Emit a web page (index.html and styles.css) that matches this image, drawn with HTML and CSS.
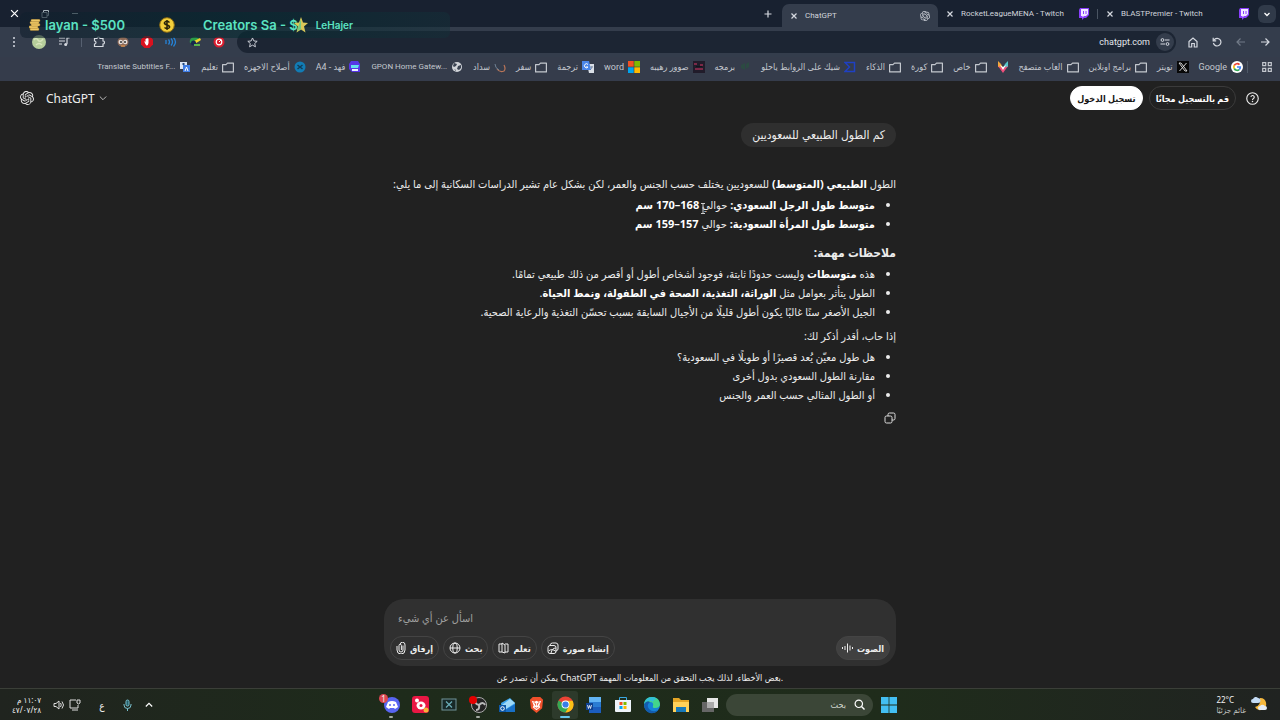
FILE: index.html
```html
<!DOCTYPE html>
<html lang="ar" dir="rtl">
<head>
    <meta charset="UTF-8">
    <meta name="viewport" content="width=device-width, initial-scale=1.0">
    <title>ChatGPT</title>
    <link rel="stylesheet" href="styles.css">
</head>
<body>
    <!-- shared icons -->
    <svg class="sprite" aria-hidden="true">
        <symbol id="folder" viewBox="0 0 12 11"><path d="M.6 2.600h3.400l1.500-1.500h5.900v8.800H.6z" fill="none" stroke="#c3c7ce" stroke-width="1.200" stroke-linejoin="round"/></symbol>
        <symbol id="close" viewBox="0 0 8 8"><path d="M1.500 1.500l5 5m0-5l-5 5" stroke="#d5d9e0" stroke-width="1.200"/></symbol>
        <symbol id="twitch" viewBox="0 0 12 12"><path d="M2 0h9v7l-3 3H6l-2 2v-2H1V2z" fill="#8a3ffc"/><path d="M3 1h7v5L8 8H6L4.500 9.500V8H3z" fill="#f1e8ff"/><path d="M5.500 3v3M8 3v3" stroke="#8a3ffc"/></symbol>
        <symbol id="openai" viewBox="0 0 24 24"><path fill="currentColor" d="M22.282 9.821a5.985 5.985 0 0 0-.516-4.911 6.046 6.046 0 0 0-6.510-2.900A6.065 6.065 0 0 0 4.981 4.182a5.985 5.985 0 0 0-3.998 2.900 6.046 6.046 0 0 0 .743 7.097 5.980 5.980 0 0 0 .511 4.911 6.051 6.051 0 0 0 6.515 2.900A5.985 5.985 0 0 0 13.260 24a6.056 6.056 0 0 0 5.772-4.206 5.989 5.989 0 0 0 3.998-2.900 6.056 6.056 0 0 0-.748-7.073zm-9.022 12.608a4.476 4.476 0 0 1-2.876-1.041l.142-.080 4.778-2.758a.795.795 0 0 0 .393-.681v-6.737l2.020 1.169a.071.071 0 0 1 .038.052v5.583a4.504 4.504 0 0 1-4.495 4.494zm-9.661-4.125a4.471 4.471 0 0 1-.535-3.014l.142.085 4.783 2.758a.771.771 0 0 0 .781 0l5.843-3.369v2.332a.080.080 0 0 1-.033.062L9.740 19.950a4.499 4.499 0 0 1-6.141-1.646zM2.341 7.896a4.485 4.485 0 0 1 2.366-1.973V11.600a.766.766 0 0 0 .388.677l5.814 3.354-2.020 1.169a.076.076 0 0 1-.071 0l-4.830-2.787A4.504 4.504 0 0 1 2.341 7.872zm16.596 3.856L13.104 8.364 15.119 7.200a.076.076 0 0 1 .071 0l4.830 2.791a4.494 4.494 0 0 1-.677 8.104v-5.677a.790.790 0 0 0-.407-.667zm2.011-3.023l-.142-.085-4.774-2.782a.776.776 0 0 0-.785 0L9.409 9.230V6.897a.066.066 0 0 1 .028-.062l4.830-2.787a4.499 4.499 0 0 1 6.680 4.660zM8.307 12.863l-2.020-1.164a.080.080 0 0 1-.038-.057V6.074a4.499 4.499 0 0 1 7.376-3.454l-.142.081L8.704 5.459a.795.795 0 0 0-.393.681zm1.098-2.365l2.602-1.500 2.607 1.500v2.999l-2.597 1.500-2.607-1.500z"/></symbol>
    </svg>

    <!-- browser window -->
    <header class="browser">
        <div class="tab-strip">
            <button class="tab-search" aria-label="Search tabs"><svg width="8" height="8" viewBox="0 0 8 8"><path d="M1.500 3L4 5.500 6.500 3" fill="none" stroke="#fff" stroke-width="1.300"/></svg></button>
            <div class="tab">
                <svg width="12" height="12"><use href="#twitch"/></svg>
                <span class="tab-title">BLASTPremier - Twitch</span>
                <button aria-label="Close tab"><svg width="8" height="8"><use href="#close"/></svg></button>
            </div>
            <div class="tab divided">
                <svg width="12" height="12"><use href="#twitch"/></svg>
                <span class="tab-title">RocketLeagueMENA - Twitch</span>
                <button aria-label="Close tab"><svg width="8" height="8"><use href="#close"/></svg></button>
            </div>
            <div class="tab active">
                <svg width="10" height="10"><use href="#openai"/></svg>
                <span class="tab-title">ChatGPT</span>
                <button aria-label="Close tab"><svg width="8" height="8"><use href="#close"/></svg></button>
            </div>
            <button class="new-tab" aria-label="New tab"><svg width="8" height="8" viewBox="0 0 8 8"><path d="M4 .5v7M.5 4h7" stroke="#d5d9e0" stroke-width="1.200"/></svg></button>
            <div class="window-buttons">
                <button aria-label="Minimize"><svg width="8" height="8" viewBox="0 0 8 8"><path d="M1 3.500h6" stroke="#a8b4bb"/></svg></button>
                <button aria-label="Restore"><svg width="8" height="8" viewBox="0 0 8 8"><path d="M1 2.500h5v5H1zM2.500 2.500v-2h5v5H6" fill="none" stroke="#a8b4bb"/></svg></button>
                <button aria-label="Close"><svg width="9" height="9" viewBox="0 0 8 8"><path d="M1 1l6 6m0-6L1 7" stroke="#fff" stroke-width="1.100"/></svg></button>
            </div>
        </div>

        <div class="toolbar">
            <div class="nav-buttons">
                <button aria-label="Back"><svg width="10" height="10" viewBox="0 0 10 10"><path d="M1 5h8M5.500 1.500L9 5 5.500 8.500" fill="none" stroke="#d5d9e0" stroke-width="1.200"/></svg></button>
                <button aria-label="Forward"><svg width="10" height="10" viewBox="0 0 10 10"><path d="M9 5H1M4.500 1.500L1 5l3.500 3.500" fill="none" stroke="#717a87" stroke-width="1.200"/></svg></button>
                <button aria-label="Reload"><svg width="10" height="10" viewBox="0 0 10 10"><path d="M2 3a3.800 3.800 0 1 1-.6 3M1.200.8v3h3" fill="none" stroke="#d5d9e0" stroke-width="1.200"/></svg></button>
                <button aria-label="Home"><svg width="10" height="11" viewBox="0 0 10 11"><path d="M1 4.500L5 1l4 3.500V10H6.300V6.500H3.700V10H1z" fill="none" stroke="#d5d9e0" stroke-width="1.200"/></svg></button>
            </div>
            <div class="address-bar">
                <button class="site-info" aria-label="Site information"><svg width="10" height="8" viewBox="0 0 10 8"><path d="M5 2h4.500M.5 6H5" stroke="#d5d9e0"/><circle cx="2.500" cy="2" r="1.400" fill="none" stroke="#d5d9e0"/><circle cx="7.500" cy="6" r="1.400" fill="none" stroke="#d5d9e0"/></svg></button>
                <input type="text" value="chatgpt.com" aria-label="Address" dir="rtl">
                <button aria-label="Bookmark"><svg width="11" height="11" viewBox="0 0 12 12"><path d="M6 1l1.500 3.300 3.600.4-2.700 2.400.8 3.600L6 8.900l-3.200 1.800.8-3.600L.9 4.700l3.600-.4z" fill="none" stroke="#d5d9e0"/></svg></button>
            </div>
            <div class="extensions">
                <svg width="12" height="12" viewBox="0 0 12 12"><circle cx="6" cy="6" r="5.500" fill="#d91c2e"/><circle cx="6" cy="6" r="2.800" fill="none" stroke="#fff" stroke-width="1.200"/><path d="M6 6l2-2" stroke="#fff"/></svg>
                <svg width="12" height="12" viewBox="0 0 12 12"><path d="M1 7a5 5 0 0 1 9-4l1 2z" fill="#2b9c48"/><path d="M11 2L3 6l1 3 8-5z" fill="#f3d52b"/><circle cx="4.500" cy="7" r="2.500" fill="#16294d"/><path d="M5 8h6v2H5z" fill="#58b64c"/></svg>
                <svg width="12" height="12" viewBox="0 0 12 12"><path d="M1 4v4M3.500 3.500q2 2.500 0 5M6 2.500q3 3.500 0 7M8.500 1.500q4 4.500 0 9" fill="none" stroke="#2583d8" stroke-width="1.300"/></svg>
                <svg width="12" height="12" viewBox="0 0 12 12"><path d="M3.500 0h5L12 3.500v5L8.500 12h-5L0 8.500v-5z" fill="#d9121f"/><path d="M3.500 5l1 1V3h1v2-3h1v3-2.500h1V7Q7 10 5.500 9.500 4.500 9 3.500 6z" fill="#fff"/></svg>
                <svg width="12" height="12" viewBox="0 0 12 12"><ellipse cx="6" cy="6" rx="5.500" ry="5" fill="#8d6a58"/><circle cx="3.700" cy="6" r="2.200" fill="#e5dfdc"/><circle cx="8.300" cy="6" r="2.200" fill="#e5dfdc"/><circle cx="4" cy="6" r="1" fill="#333"/><circle cx="8" cy="6" r="1" fill="#333"/><path d="M4 10h4" stroke="#ef9d4a"/></svg>
                <svg width="12" height="12" viewBox="0 0 12 12"><path d="M1.500 2.500H4a1.500 1.500 0 0 1 3 0h3V5a1.500 1.500 0 0 1 0 3v2.500H1.500V8a1.500 1.500 0 0 0 0-3z" fill="none" stroke="#d5d9e0" stroke-width="1.200"/></svg>
                <span class="divider"></span>
                <svg width="12" height="12" viewBox="0 0 12 12"><path d="M1 2h6M1 5h6M1 8h3M9 8V2h2.500" fill="none" stroke="#d5d9e0" stroke-width="1.200"/><circle cx="7.700" cy="8.500" r="1.500" fill="#d5d9e0"/></svg>
                <svg width="14" height="14" viewBox="0 0 14 14"><circle cx="7" cy="7" r="7" fill="#b6ce9b"/><path d="M2 5q2-3 4 0t5-1M4 10q3-3 6 0" fill="none" stroke="#d8e5bc" stroke-width="1.500"/></svg>
                <svg width="12" height="12" viewBox="0 0 12 12"><g fill="#d5d9e0"><circle cx="6" cy="2" r="1"/><circle cx="6" cy="6" r="1"/><circle cx="6" cy="10" r="1"/></g></svg>
            </div>
        </div>

        <nav class="bookmarks">
            <button class="apps" aria-label="Apps"><svg width="10" height="10" viewBox="0 0 10 10"><path d="M.7.7h3v3h-3zM6.300.7h3v3h-3zM.7 6.300h3v3h-3zM6.300 6.300h3v3h-3z" fill="none" stroke="#c3c7ce" stroke-width="1.200"/></svg></button>
            <ul>
                <li><a href="#"><svg width="12" height="12" viewBox="0 0 12 12"><circle cx="6" cy="6" r="6" fill="#fff"/><g fill="none" stroke-width="1.700"><path d="M8.500 3.700A3.300 3.300 0 0 0 3.200 4.500" stroke="#ea4335"/><path d="M3.200 4.500a3.300 3.300 0 0 0 0 3" stroke="#fbbc05"/><path d="M3.200 7.500a3.300 3.300 0 0 0 5 1.100" stroke="#34a853"/><path d="M8.200 8.600A3.300 3.300 0 0 0 9.300 6H6" stroke="#4285f4"/></g></svg>Google</a></li>
                <li><a href="#"><svg width="12" height="12" viewBox="0 0 12 12"><path d="M0 0h12v12H0z" fill="#080808"/><path d="M2 2h2l6 8H8zM9.500 2L2.500 10" fill="none" stroke="#e5e5e5" stroke-width=".9"/></svg>تويتر</a></li>
                <li><a href="#"><svg width="12" height="11"><use href="#folder"/></svg>برامج اونلاين</a></li>
                <li><a href="#"><svg width="12" height="11"><use href="#folder"/></svg>العاب متصفح</a></li>
                <li><a href="#" aria-label="Fox"><svg width="12" height="12" viewBox="0 0 12 12"><path d="M1 0l3 3 2 4-5-1z" fill="#f3a73c"/><path d="M11 0L8 3 6 7l5-1z" fill="#55c7c9"/><path d="M1 5l5 7 5-7-5 2z" fill="#ef4f7b"/><path d="M3 4l3 5 3-5-3 2z" fill="#fff"/></svg></a></li>
                <li><a href="#"><svg width="12" height="11"><use href="#folder"/></svg>خاص</a></li>
                <li><a href="#"><svg width="12" height="11"><use href="#folder"/></svg>كورة</a></li>
                <li><a href="#"><svg width="12" height="11"><use href="#folder"/></svg>الذكاء</a></li>
                <li><a href="#"><svg width="12" height="12" viewBox="0 0 12 12"><path d="M1 1.500h9.500v9H1L5.500 6z" fill="none" stroke="#1f40c4" stroke-width="1.500"/></svg>شيك على الروابط ياحلو</a></li>
                <li><a href="#"><svg width="12" height="12" viewBox="0 0 12 12"><path d="M2 4l4-2v7l-4-2zM7 3l3-2v5L7 8z" fill="#2c4a42"/></svg>برمجه</a></li>
                <li><a href="#"><svg width="12" height="12" viewBox="0 0 12 12"><path d="M0 0h12v12H0z" fill="#211c2a"/><path d="M1 3h3M7 4h3M2 8h8" stroke="#7c2947" stroke-width="2"/><path d="M3 5.500h6" stroke="#11151b"/></svg>صوور رهيبه</a></li>
                <li><a href="#"><svg width="12" height="12" viewBox="0 0 12 12"><path d="M0 0h5.700v5.700H0z" fill="#f25022"/><path d="M6.300 0H12v5.700H6.300z" fill="#7fba00"/><path d="M0 6.300h5.700V12H0z" fill="#00a4ef"/><path d="M6.300 6.300H12V12H6.300z" fill="#ffb900"/></svg>word</a></li>
                <li><a href="#"><svg width="12" height="12" viewBox="0 0 12 12"><path d="M5 3h7v9H7z" fill="#dadfe7"/><path d="M0 0h7l2 9H0z" fill="#4a86e8"/><path d="M6 3.500A2 2 0 1 0 6 6H4" fill="none" stroke="#fff"/><path d="M8 6h3M10 5q0 3-2 4" fill="none" stroke="#647794" stroke-width=".7"/></svg>ترجمة</a></li>
                <li><a href="#"><svg width="12" height="11"><use href="#folder"/></svg>سفر</a></li>
                <li><a href="#"><svg width="12" height="12" viewBox="0 0 12 12"><path d="M3 8q3 4 7 2 2-2 0-6" fill="none" stroke="#b97558" stroke-width="1.200"/><path d="M1 3q0 4 4 6" fill="none" stroke="#708295"/></svg>سداد</a></li>
                <li><a href="#"><svg width="12" height="12" viewBox="0 0 12 12"><circle cx="6" cy="6" r="5" fill="#d0d3d8"/><path d="M3 2l3 1-1 2-2 1-1-1zM7 5l3-1v3L8 9 6 8zM3 8l2 1v1z" fill="#3a4251"/></svg><bdi>GPON Home Gatew...</bdi></a></li>
                <li><a href="#"><svg width="12" height="12" viewBox="0 0 12 12"><path d="M2 0h7l2 3v8H3L0 8V3z" fill="#5735e5"/><path d="M2 4h8l-1 3H2z" fill="#65e0ef"/><path d="M3 8h6v2H3z" fill="#eaf2ff"/></svg>فهد - A4</a></li>
                <li><a href="#"><svg width="12" height="12" viewBox="0 0 12 12"><circle cx="6" cy="6" r="5.500" fill="#127cb5"/><path d="M3.500 4l5 4m0-4l-5 4" stroke="#103c59" stroke-width="1.500"/></svg>أصلاح الاجهزه</a></li>
                <li><a href="#"><svg width="12" height="11"><use href="#folder"/></svg>تعليم</a></li>
                <li><a href="#"><svg width="12" height="12" viewBox="0 0 12 12"><path d="M1 1h7v7H1z" fill="#dbe5f5"/><path d="M4 4h7v7H4z" fill="#3f7de5"/><path d="M3 3h3M4.500 2v2" fill="none" stroke="#21477e"/><path d="M6 10l1.500-4L9 10" fill="none" stroke="#fff"/></svg><bdi>Translate Subtitles F...</bdi></a></li>
            </ul>
        </nav>

        <!-- stream alert band -->
        <div class="alert-band" dir="ltr">
            <span class="donor"><svg width="12" height="12" viewBox="0 0 12 12"><g fill="#eec968" stroke="#a37829" stroke-width=".4"><rect x="1" y="9" width="9" height="2.500" rx="1"/><rect x="0" y="6.800" width="9" height="2.500" rx="1"/><rect x="2" y="4.600" width="9" height="2.500" rx="1"/><rect x="1" y="2.400" width="9" height="2.500" rx="1"/><rect x="2" y=".3" width="9" height="2.500" rx="1"/></g></svg>layan - $500</span>
            <svg class="coin" width="16" height="16" viewBox="0 0 16 16"><circle cx="8" cy="8" r="7.300" fill="#f2cf3b" stroke="#8d6c13"/><path d="M10.500 5.500Q8 3.500 6 5t2 3 2 3-4.500-.5M8 3v10" fill="none" stroke="#272309" stroke-width="1.500"/></svg>
            <span class="goal">Creators Sa - $<svg width="14" height="16" viewBox="0 0 14 16"><path d="M7 0l2 5.500 5 .5-4 3.500 1.500 6L7 12.500 2.500 15.500 4 9.500 0 6l5-.5z" fill="#d9c858"/><path d="M7 2v10l-4 2 1.500-5z" fill="#75c982"/></svg></span>
            <span class="follower">LeHajer</span>
        </div>
    </header>

    <!-- chat page -->
    <main class="chat">
        <div class="chat-header">
            <button class="help" aria-label="مساعدة"><svg width="13" height="13" viewBox="0 0 14 14"><circle cx="7" cy="7" r="6.200" fill="none" stroke="#eee" stroke-width="1.200"/><path d="M5.300 5.500a1.800 1.800 0 1 1 2.500 1.700q-.8.4-.8 1.300" fill="none" stroke="#eee" stroke-width="1.200"/><circle cx="7" cy="10.300" r=".8" fill="#eee"/></svg></button>
            <button class="sign-up">قم بالتسجيل مجانًا</button>
            <button class="log-in">تسجيل الدخول</button>
            <button class="model" dir="ltr">
                <svg width="14" height="14"><use href="#openai"/></svg>
                <span>ChatGPT</span>
                <svg width="8" height="8" viewBox="0 0 8 8"><path d="M.8 2.500L4 5.700l3.200-3.200" fill="none" stroke="#bbb"/></svg>
            </button>
        </div>

        <div class="thread">
            <p class="question">كم الطول الطبيعي للسعوديين</p>
            <article class="answer">
                <p>الطول <strong>الطبيعي (المتوسط)</strong> للسعوديين يختلف حسب الجنس والعمر، لكن بشكل عام تشير الدراسات السكانية إلى ما يلي:</p>
                <ul>
                    <li><strong>متوسط طول الرجل السعودي:</strong> حوالي <strong>168–170 سم</strong></li>
                    <li><strong>متوسط طول المرأة السعودية:</strong> حوالي <strong>157–159 سم</strong></li>
                </ul>
                <h3>ملاحظات مهمة:</h3>
                <ul>
                    <li>هذه <strong>متوسطات</strong> وليست حدودًا ثابتة، فوجود أشخاص أطول أو أقصر من ذلك طبيعي تمامًا.</li>
                    <li>الطول يتأثر بعوامل مثل <strong>الوراثة، التغذية، الصحة في الطفولة، ونمط الحياة</strong>.</li>
                    <li>الجيل الأصغر سنًا غالبًا يكون أطول قليلًا من الأجيال السابقة بسبب تحسّن التغذية والرعاية الصحية.</li>
                </ul>
                <p>إذا حاب، أقدر أذكر لك:</p>
                <ul>
                    <li>هل طول معيّن يُعد قصيرًا أو طويلًا في السعودية؟</li>
                    <li>مقارنة الطول السعودي بدول أخرى</li>
                    <li>أو الطول المثالي حسب العمر والجنس</li>
                </ul>
                <button class="copy" aria-label="نسخ"><svg width="12" height="12" viewBox="0 0 12 12"><rect x="1" y="4" width="7" height="7" rx="1.500" fill="none" stroke="#ddd"/><path d="M4 4V2.500A1.500 1.500 0 0 1 5.500 1h4A1.500 1.500 0 0 1 11 2.500v4A1.500 1.500 0 0 1 9.500 8H8" fill="none" stroke="#ddd"/></svg></button>
                <svg class="cursor" width="6" height="11" viewBox="0 0 6 11"><path d="M1 .5h4M3 .5v10M1 10.500h4" stroke="#ccc"/></svg>
            </article>
        </div>

        <div class="composer-area">
            <form class="composer">
                <input type="text" placeholder="اسأل عن أي شيء" aria-label="اسأل عن أي شيء">
                <div class="composer-tools" dir="ltr">
                    <button type="button"><svg width="10" height="12" viewBox="0 0 10 12"><path d="M7 3.500v4.500a2 2 0 0 1-4 0V3.500a1.200 1.200 0 0 1 2.400 0V8M1 4v4a4 4 0 0 0 8 0V3a2.500 2.500 0 0 0-5-.5" fill="none" stroke="#eee"/></svg><span>إرفاق</span></button>
                    <button type="button"><svg width="12" height="12" viewBox="0 0 12 12"><g fill="none" stroke="#eee"><circle cx="6" cy="6" r="5"/><ellipse cx="6" cy="6" rx="2.200" ry="5"/><path d="M1 6h10"/></g></svg><span>بحث</span></button>
                    <button type="button"><svg width="11" height="12" viewBox="0 0 11 12"><path d="M4 2H1v8h3M4 1l3 2v8L4 10zM7 2h3v8H7" fill="none" stroke="#eee"/></svg><span>تعلم</span></button>
                    <button type="button"><svg width="12" height="12" viewBox="0 0 12 12"><rect x="1" y="3.500" width="8" height="8" rx="2" fill="none" stroke="#eee"/><path d="M3 3q.5-2 2.500-2H9q2 .3 2 2v4q0 1.500-2 2M1.500 9Q5 6 9 9.500M4 11Q5 6 9 6" fill="none" stroke="#eee"/></svg><span>إنشاء صورة</span></button>
                    <button type="button" class="voice"><svg width="11" height="12" viewBox="0 0 11 12"><path d="M.5 5v2M3 4v4M5.500 1.500v9M8 3.500v5M10.500 5v2" stroke="#eee"/></svg><span>الصوت</span></button>
                </div>
            </form>
            <p class="disclaimer" dir="ltr">يمكن أن تصدر عن ChatGPT بعض الأخطاء. لذلك يجب التحقق من المعلومات المهمة.</p>
        </div>
    </main>

    <!-- windows taskbar -->
    <footer class="taskbar">
        <div class="weather">
            <svg width="17" height="17" viewBox="0 0 17 17"><path d="M9 2a6 6 0 1 1-5 9Q10 10 9 2z" fill="#f5b83d"/><path d="M2 7a2 2 0 0 1 0-4 3 3 0 0 1 5-1 2.500 2.500 0 0 1 0 5z" fill="#c4dcf5"/><path d="M9 14a2 2 0 0 1 0-4 3 3 0 0 1 5 0 2 2 0 0 1 0 4z" fill="#e5edf7"/></svg>
            <div><span dir="ltr">22°C</span><span class="sky">غائم جزئيًا</span></div>
        </div>
        <div class="apps-row">
            <button aria-label="Start"><svg width="16" height="16" viewBox="0 0 16 16"><path d="M0 0h7.600v7.600H0zM8.400 0H16v7.600H8.400zM0 8.400h7.600V16H0zM8.400 8.400H16V16H8.400z" fill="#43bff2"/></svg></button>
            <label class="search"><svg width="11" height="11" viewBox="0 0 11 11"><circle cx="4.800" cy="4.800" r="3.700" fill="none" stroke="#fff" stroke-width="1.200"/><path d="M7.500 7.500l3 3" stroke="#fff" stroke-width="1.400"/></svg><input type="text" placeholder="بحث" aria-label="بحث"></label>
            <button aria-label="Task view"><svg width="18" height="16" viewBox="0 0 18 16"><path d="M1 5h12v10H1z" fill="#666"/><path d="M6 1h11v10H6z" fill="#e7e7e7"/><path d="M6 5h7v6H6z" fill="#aaa"/></svg></button>
            <button aria-label="File Explorer"><svg width="18" height="16" viewBox="0 0 18 16"><path d="M1 1h6l2 2h8v12H1z" fill="#e4a526"/><path d="M1 5h16v10H1z" fill="#ffd15a"/><path d="M4 10h10v5H4z" fill="#1779ba"/></svg></button>
            <button aria-label="Edge"><svg width="18" height="18" viewBox="0 0 18 18"><circle cx="9" cy="9" r="8" fill="#1683d8"/><path d="M1 8Q2 1 9 1t8 7q0 4-5 4-3 0-2-2 1-4-3-4-4 0-6 4z" fill="#43d58b"/><path d="M1 8Q3 1 9 1q3 0 5 2-4 0-4 4-1-3-4-2-3 0-5 3z" fill="#32bfd8"/><path d="M1 8q3-4 6-2-4 3-1 7 4 4 9 1-3 4-8 3Q1 15 1 8z" fill="#135cae"/></svg></button>
            <button aria-label="Store"><svg width="18" height="17" viewBox="0 0 18 17"><path d="M5.500 5V1.500h7V5" fill="none" stroke="#3ba8e2"/><path d="M1 4h16v11q0 1-1 1H2q-1 0-1-1z" fill="#eef4fa"/><path d="M5.500 6h3v3h-3z" fill="#f25022"/><path d="M9.500 6h3v3h-3z" fill="#7fba00"/><path d="M5.500 10h3v3h-3z" fill="#00a4ef"/><path d="M9.500 10h3v3h-3z" fill="#ffb900"/></svg></button>
            <button aria-label="Word"><svg width="16" height="16" viewBox="0 0 16 16"><path d="M3 0h12v5H3z" fill="#62b4f4"/><path d="M3 5h12v5H3z" fill="#2b7cd3"/><path d="M3 10h12v6H3z" fill="#1b5dbe"/><path d="M0 6h7v7H0z" fill="#104291"/><path d="M1.500 8l1 3.500 1-3 1 3 1-3.500" fill="none" stroke="#fff" stroke-width=".8"/></svg></button>
            <button class="open" aria-label="Chrome"><svg width="17" height="17" viewBox="0 0 18 18"><circle cx="9" cy="9" r="8.500" fill="#e94335"/><path d="M9 9L1.600 4.800A8.500 8.500 0 0 0 9 17.500l4-6.200z" fill="#35a853"/><path d="M9 5h7.500A8.500 8.500 0 0 1 9 17.500L12.600 11z" fill="#fbc116"/><circle cx="9" cy="9" r="4.200" fill="#fff"/><circle cx="9" cy="9" r="3.300" fill="#397ee8"/></svg></button>
            <button aria-label="Brave"><svg width="15" height="17" viewBox="0 0 16 18"><path d="M4 1h8l3 3-1 9-6 5-6-5L1 4z" fill="#f0502b"/><path d="M3 5l3 1 2-1 2 1 3-1-2 5 1 2-4 3-4-3 1-2z" fill="#fff"/><path d="M5 7l2 1v2M11 7L9 8v2M6 12l2 1 2-1" fill="none" stroke="#f0502b"/></svg></button>
            <button aria-label="Outlook"><svg width="17" height="16" viewBox="0 0 17 16"><path d="M2 6l9-5 5 5v9H3z" fill="#3ba5ee"/><path d="M3 8l8-6 5 4-9 6z" fill="#9edaf8"/><path d="M3 15l13-8v8z" fill="#1870c7"/><path d="M0 8h7v7H0z" fill="#0e59a8"/><circle cx="3.500" cy="11.500" r="1.800" fill="none" stroke="#fff"/></svg></button>
            <button class="running" aria-label="OBS"><svg width="18" height="18" viewBox="0 0 18 18"><circle cx="10" cy="9" r="7.500" fill="#242424" stroke="#aaa"/><path d="M10 9Q5 8 7 4M10 9q1 5-3 5M10 9q4-4 6 0" fill="none" stroke="#bbb" stroke-width="2"/><circle cx="4" cy="4" r="4" fill="#e50000"/></svg></button>
            <button aria-label="XSplit"><svg width="16" height="13" viewBox="0 0 16 13"><rect x="1" y="1" width="14" height="11" fill="#172928" stroke="#71939a"/><path d="M5 3.500l6 6m0-6l-6 6" stroke="#6badb8" stroke-width="1.200"/></svg></button>
            <button aria-label="Recorder"><svg width="17" height="17" viewBox="0 0 17 17"><rect x="0" y="0" width="17" height="17" rx="3" fill="#e91744"/><ellipse cx="9" cy="9.500" rx="4.500" ry="4" fill="#fff"/><circle cx="5" cy="4.500" r="2" fill="#fff"/><circle cx="9" cy="9.500" r="1.500" fill="#e91744"/><circle cx="14" cy="14" r="2.500" fill="#f5b438"/></svg></button>
            <button class="running" aria-label="Discord"><svg width="17" height="17" viewBox="0 0 17 17"><circle cx="9" cy="9" r="8" fill="#5865f2"/><path d="M5 6q4-2 8 0l2 5-3 2-1-1H7l-1 1-3-2z" fill="#fff"/><circle cx="7" cy="9" r="1" fill="#5865f2"/><circle cx="11" cy="9" r="1" fill="#5865f2"/></svg><span class="badge">1</span></button>
        </div>
        <div class="tray">
            <svg width="8" height="8" viewBox="0 0 8 8"><path d="M.8 5.500L4 2.300l3.200 3.200" fill="none" stroke="#fff" stroke-width="1.200"/></svg>
            <svg width="9" height="12" viewBox="0 0 9 12"><rect x="3" y="1" width="3" height="6" rx="1.500" fill="#245d68" stroke="#7ac1ce"/><path d="M1 5v1a3.500 3.500 0 0 0 7 0V5M4.500 9.500V12" fill="none" stroke="#7ac1ce"/></svg>
            <span class="language">ع</span>
            <div class="network">
                <svg width="12" height="12" viewBox="0 0 12 12"><path d="M7 1H1v8h8V6M3 11h6M8 1h3v3L9.500 5 8 4z" fill="none" stroke="#ddd"/></svg>
                <svg width="12" height="12" viewBox="0 0 12 12"><path d="M1 4.500h2L6 2v8L3 7.500H1zM7.500 4q1.500 2 0 4M9 2.500q3 3.500 0 7" fill="none" stroke="#ddd"/></svg>
            </div>
            <div class="clock"><span>١١:٠٧ م</span><span>٤٧/٠٧/٢٨</span></div>
        </div>
    </footer>
</body>
</html>
```
FILE: styles.css
```css
* {
    box-sizing: border-box;
}
body {
    margin: 0;
    min-height: 100vh;
    display: flex;
    flex-direction: column;
    background: #212121;
    color: #ececec;
    font-family: "Noto Sans", "DejaVu Sans Condensed", "DejaVu Sans", sans-serif;
    font-size: 11px;
}
button, input {
    font: inherit;
    color: inherit;
    background: none;
    border: 0;
    padding: 0;
}
button {
    display: flex;
    align-items: center;
    justify-content: center;
}
svg {
    display: block;
    flex: none;
}
ul, p, h3 {
    margin: 0;
    padding: 0;
}
.sprite {
    position: absolute;
    width: 0;
    height: 0;
}

/* browser */
.browser {
    position: relative;
    background: #343d4c;
    font-family: Roboto, "DejaVu Sans Condensed", "DejaVu Sans", sans-serif;
    font-size: 9px;
    color: #d0d4db;
}
.tab-strip {
    display: flex;
    align-items: center;
    height: 27px;
    padding: 0 4px 0 10px;
    background: #182130;
}
.tab-search {
    width: 18px;
    height: 18px;
    border-radius: 6px;
    background: #303a49;
}
.tab {
    display: flex;
    align-items: center;
    gap: 7px;
    width: 160px;
    height: 23px;
    padding: 0 8px;
}
.tab-title {
    flex: 1;
    text-align: left;
    white-space: nowrap;
    font-size: 8px;
}
.tab.divided {
    background: linear-gradient(#4a5462, #4a5462) right center / 1px 10px no-repeat;
}
.tab.active {
    width: 156px;
    align-self: flex-end;
    background: #343d4c;
    border-radius: 7px 7px 0 0;
}
.new-tab {
    margin-right: 10px;
}
.window-buttons {
    display: flex;
    gap: 22px;
    margin-right: auto;
}
.toolbar {
    display: flex;
    align-items: center;
    height: 30px;
    padding: 0 10px 0 8px;
}
.nav-buttons {
    display: flex;
    align-items: center;
    gap: 14px;
    margin-left: 12px;
}
.address-bar {
    flex: 1;
    display: flex;
    align-items: center;
    gap: 6px;
    height: 22px;
    padding: 0 2px 0 10px;
    border-radius: 11px;
    background: #1c2533;
}
.address-bar input {
    flex: 1;
    color: #e4e7ec;
}
.site-info {
    width: 18px;
    height: 18px;
    border-radius: 9px;
    background: #343d4c;
}
.extensions {
    display: flex;
    align-items: center;
    gap: 12px;
    margin-right: 12px;
}
.divider {
    width: 1px;
    height: 9px;
    margin: 0 -1px;
    background: #566070;
}
.bookmarks {
    display: flex;
    align-items: center;
    height: 24px;
    padding: 0 8px 4px 97px;
    background: #353c4b;
}
.apps {
    padding-left: 14px;
}
.bookmarks ul {
    flex: 1;
    display: flex;
    justify-content: space-between;
    list-style: none;
    padding-right: 4px;
    border-right: 1px solid #4f5967;
}
.bookmarks a {
    display: flex;
    align-items: center;
    gap: 4px;
    color: #c3c7ce;
    text-decoration: none;
    white-space: nowrap;
    line-height: 12px;
}
.bookmarks bdi {
    font-size: 8px;
}
.alert-band {
    position: absolute;
    left: 20px;
    top: 12px;
    display: flex;
    align-items: center;
    width: 430px;
    height: 26px;
    padding-left: 9px;
    border-radius: 6px;
    background: linear-gradient(90deg, rgba(17, 31, 45, 0.6), rgba(6, 43, 49, 0.6) 50%, rgba(20, 48, 57, 0.5));
    color: #5be3c2;
    font-family: Inter, sans-serif;
    font-size: 13px;
    font-weight: 600;
}
.donor, .goal {
    display: flex;
    align-items: center;
    gap: 4px;
}
.coin {
    margin: 0 28px 0 34px;
}
.goal {
    gap: 0;
}
.goal svg {
    margin-left: -4px;
}
.follower {
    font-size: 10px;
    margin-left: 8px;
}

/* chat */
.chat {
    flex: 1;
    display: flex;
    flex-direction: column;
}
.chat-header {
    display: flex;
    align-items: center;
    gap: 6px;
    height: 34px;
    padding: 0 21px 0 20px;
}
.help {
    margin-left: 4px;
}
.sign-up, .log-in {
    height: 24px;
    padding: 0 6px;
    border: 1px solid #3b3b3b;
    border-radius: 12px;
    font-size: 9px;
    font-weight: bold;
    color: #fff;
}
.log-in {
    background: #fff;
    border-color: #fff;
    color: #151515;
}
.model {
    gap: 4px;
    margin-right: auto;
    font-size: 12px;
}
.model span {
    margin-left: 8px;
}
.thread {
    flex: 1;
    width: 100%;
    max-width: 512px;
    margin: 0 auto;
    padding-top: 8px;
}
.question {
    width: fit-content;
    padding: 3px 11px;
    border-radius: 12px;
    background: #2f2f2f;
    font-size: 12px;
    line-height: 18px;
}
.answer {
    position: relative;
    margin-top: 27px;
    line-height: 19px;
}
.answer ul {
    margin-top: 2px;
    padding-right: 21px;
}
.answer ul + h3 {
    margin-top: 10px;
    font-size: 12px;
}
.answer ul + p {
    margin-top: 5px;
}
.answer strong {
    color: #fff;
}
.copy {
    margin-top: 8px;
}
.cursor {
    position: absolute;
    left: 316px;
    top: 29px;
}
.composer-area {
    width: 100%;
    max-width: 512px;
    margin: 0 auto;
}
.composer {
    display: flex;
    flex-direction: column;
    padding: 7px 6px 6px;
    border-radius: 20px;
    background: #303030;
}
.composer > input {
    height: 22px;
    padding: 0 8px;
    text-align: left;
}
.composer ::placeholder {
    color: #a0a0a0;
}
.composer-tools {
    display: flex;
    gap: 4px;
    margin-top: 8px;
}
.composer-tools button {
    gap: 4px;
    height: 24px;
    padding: 0 5px;
    border: 1px solid #444;
    border-radius: 12px;
    font-size: 9px;
    font-weight: bold;
}
.composer-tools .voice {
    margin-left: auto;
    background: #404040;
}
.disclaimer {
    padding: 4px 0 3px;
    text-align: center;
    font-size: 9px;
    line-height: 15px;
}

/* taskbar */
.taskbar {
    display: flex;
    align-items: center;
    height: 32px;
    padding: 0 12px;
    border-top: 1px solid #3b3f38;
    background: linear-gradient(90deg, #20241f, #1e2b1b 30%, #1f2c1b 70%, #202321);
    font-size: 8px;
    color: #f1f1f1;
}
.weather, .tray {
    flex: 1;
    display: flex;
    align-items: center;
}
.weather {
    gap: 5px;
}
.weather span, .clock span {
    display: block;
    line-height: 10px;
}
.sky {
    color: #c2c4c1;
}
.apps-row {
    display: flex;
    align-items: center;
    gap: 3px;
}
.apps-row button {
    position: relative;
    width: 26px;
    height: 28px;
    border-radius: 3px;
}
.search {
    display: flex;
    align-items: center;
    gap: 8px;
    width: 147px;
    height: 22px;
    padding: 0 8px;
    border-radius: 11px;
    background: #3b4637;
    font-size: 9px;
}
.search input {
    width: 100px;
}
.search ::placeholder {
    color: #cdd2cb;
}
.apps-row .open {
    background: #2d3a2b;
}
.open::after, .running::after {
    content: "";
    position: absolute;
    bottom: 1px;
    width: 4px;
    height: 2px;
    border-radius: 1px;
    background: #a4aaa3;
}
.open::after {
    width: 10px;
    background: #67c7ed;
}
.badge {
    position: absolute;
    left: 1px;
    top: 3px;
    width: 9px;
    border-radius: 5px;
    background: #dc4650;
    line-height: 9px;
}
.tray {
    justify-content: flex-end;
}
.language {
    margin: 0 18px;
    font-size: 10px;
}
.tray > svg + svg {
    margin-right: 13px;
}
.network {
    display: flex;
    gap: 4px;
    margin-left: 12px;
}
```
